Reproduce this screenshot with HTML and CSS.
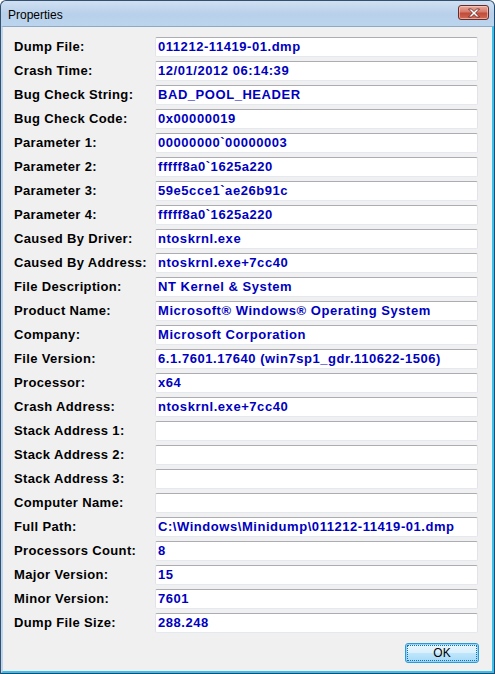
FILE: index.html
```html
<!DOCTYPE html>
<html>
<head>
<meta charset="utf-8">
<title>Properties</title>
<link rel="stylesheet" href="styles.css">
</head>
<body>
<div class="window">
  <div class="titlebar">
    <span class="title">Properties</span>
    <button class="close" aria-label="Close">
      <svg width="14" height="10" viewBox="0 0 14 10">
        <path d="M1.5 1 L4.5 1 L7 3.5 L9.5 1 L12.5 1 L8.6 5 L12.5 9 L9.5 9 L7 6.5 L4.5 9 L1.5 9 L5.4 5 Z" fill="#ffffff" stroke="#5a2020" stroke-width="0.8" stroke-linejoin="round"/>
      </svg>
    </button>
  </div>
  <div class="client">
    <div class="props">
      <div class="label">Dump File:</div><div class="value">011212-11419-01.dmp</div>
      <div class="label">Crash Time:</div><div class="value">12/01/2012 06:14:39</div>
      <div class="label">Bug Check String:</div><div class="value">BAD_POOL_HEADER</div>
      <div class="label">Bug Check Code:</div><div class="value">0x00000019</div>
      <div class="label">Parameter 1:</div><div class="value">00000000`00000003</div>
      <div class="label">Parameter 2:</div><div class="value">fffff8a0`1625a220</div>
      <div class="label">Parameter 3:</div><div class="value">59e5cce1`ae26b91c</div>
      <div class="label">Parameter 4:</div><div class="value">fffff8a0`1625a220</div>
      <div class="label">Caused By Driver:</div><div class="value">ntoskrnl.exe</div>
      <div class="label">Caused By Address:</div><div class="value">ntoskrnl.exe+7cc40</div>
      <div class="label">File Description:</div><div class="value">NT Kernel &amp; System</div>
      <div class="label">Product Name:</div><div class="value">Microsoft® Windows® Operating System</div>
      <div class="label">Company:</div><div class="value">Microsoft Corporation</div>
      <div class="label">File Version:</div><div class="value">6.1.7601.17640 (win7sp1_gdr.110622-1506)</div>
      <div class="label">Processor:</div><div class="value">x64</div>
      <div class="label">Crash Address:</div><div class="value">ntoskrnl.exe+7cc40</div>
      <div class="label">Stack Address 1:</div><div class="value"></div>
      <div class="label">Stack Address 2:</div><div class="value"></div>
      <div class="label">Stack Address 3:</div><div class="value"></div>
      <div class="label">Computer Name:</div><div class="value"></div>
      <div class="label">Full Path:</div><div class="value">C:\Windows\Minidump\011212-11419-01.dmp</div>
      <div class="label">Processors Count:</div><div class="value">8</div>
      <div class="label">Major Version:</div><div class="value">15</div>
      <div class="label">Minor Version:</div><div class="value">7601</div>
      <div class="label">Dump File Size:</div><div class="value">288.248</div>
    </div>
    <div class="actions">
      <button class="ok"><span class="focus">OK</span></button>
    </div>
  </div>
</div>
</body>
</html>
```
FILE: styles.css
```css
html, body {
  margin: 0;
  padding: 0;
  background: #ffffff;
}

.window {
  box-sizing: border-box;
  width: 495px;
  height: 674px;
  display: flex;
  flex-direction: column;
  border: 1px solid #34506f;
  border-right-color: #1f4a6e;
  border-bottom-color: #1f4a6e;
  border-radius: 6px 6px 0 0;
  background: linear-gradient(to bottom, #d0e0f2 0, #b8d0ea 13px, #bcd5ee 26px);
  font-family: "Liberation Sans", Arial, sans-serif;
}

.titlebar {
  height: 25px;
  display: flex;
  align-items: center;
  justify-content: space-between;
  padding: 0 5px 0 7px;
  box-sizing: border-box;
}

.title {
  font-size: 12px;
  color: #000000;
  margin-top: 2px;
}

.close {
  width: 31px;
  height: 15px;
  margin-top: -2px;
  padding: 0;
  border: 1px solid #6b2a2a;
  border-radius: 3px;
  background: linear-gradient(to bottom, #e9a99b 0, #d57a6a 45%, #c24a3a 55%, #cf6b55 100%);
  display: flex;
  align-items: center;
  justify-content: center;
  box-shadow: inset 0 0 0 1px rgba(255, 220, 210, 0.55);
}

.client {
  flex: 1;
  display: flex;
  flex-direction: column;
  background: #f0f0f0;
  border-top: 1px solid #8fa8c4;
  border-left: 2px solid #bcd6ee;
  border-right: 2px solid #3cbfeb;
  border-bottom: 2px solid #3cbfeb;
  padding: 10px 13px 8px 11px;
}

.props {
  display: grid;
  grid-template-columns: 141px 323px;
  grid-auto-rows: 20px;
  row-gap: 4px;
}

.label {
  font-size: 13px;
  font-weight: bold;
  line-height: 20px;
  letter-spacing: 0.35px;
  color: #000000;
  white-space: nowrap;
}

.value {
  box-sizing: border-box;
  height: 20px;
  background: #ffffff;
  border: 1px solid #e2e3ea;
  border-top-color: #abadb3;
  border-bottom-color: #e3e9ef;
  border-radius: 2px;
  padding: 0 2px;
  font-size: 13px;
  font-weight: bold;
  line-height: 18px;
  letter-spacing: 0.55px;
  color: #0000c0;
  white-space: nowrap;
  overflow: hidden;
}

.actions {
  display: flex;
  justify-content: flex-end;
  margin-top: auto;
}

.ok {
  width: 74px;
  height: 20px;
  padding: 1px;
  border: 1px solid #2c9ad8;
  border-radius: 3px;
  background: linear-gradient(to bottom, #eaf6fd 0, #d9f0fc 50%, #bee6fd 51%, #a7d9f5 100%);
  box-shadow: inset 0 0 0 1px #8ed6f8;
  font-family: "Liberation Sans", Arial, sans-serif;
  font-size: 12px;
  color: #000000;
  display: flex;
}

.focus {
  flex: 1;
  display: flex;
  align-items: center;
  justify-content: center;
  border: 1px dotted #1b6fa8;
}
```
